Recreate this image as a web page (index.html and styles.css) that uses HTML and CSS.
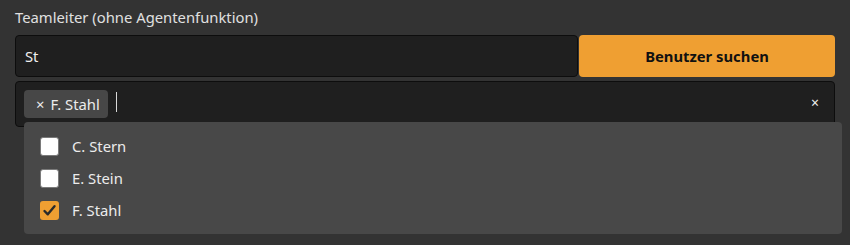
FILE: index.html
```html
<!DOCTYPE html>
<html lang="de">
<head>
<meta charset="utf-8">
<link rel="stylesheet" href="styles.css">
</head>
<body>
<div class="field">
  <div class="label">Teamleiter (ohne Agentenfunktion)</div>
  <div class="search-row">
    <div class="search-input">St</div>
    <button class="search-btn">Benutzer suchen</button>
  </div>
  <div class="multi">
    <div class="multi-box">
      <span class="chip"><span class="chip-x">×</span>F. Stahl</span>
      <span class="caret"></span>
      <span class="clear">×</span>
    </div>
    <ul class="dropdown">
      <li class="option"><span class="box"></span><span>C. Stern</span></li>
      <li class="option"><span class="box"></span><span>E. Stein</span></li>
      <li class="option"><span class="box checked"><svg viewBox="0 0 19 19" width="19" height="19"><path d="M4.5 10 L7.8 13.3 L14.5 5.2" fill="none" stroke="#2a2a2a" stroke-width="2.4" stroke-linecap="round" stroke-linejoin="round"/></svg></span><span>F. Stahl</span></li>
    </ul>
  </div>
</div>
</body>
</html>
```
FILE: styles.css
```css
* { box-sizing: border-box; }
html, body {
  margin: 0;
  padding: 0;
  background: #333333;
  height: 245px;
  overflow: hidden;
}
body {
  font-family: "Noto Sans", "Open Sans", sans-serif;
  font-size: 14.8px;
  color: #e8e8e8;
}
.field {
  padding: 7px 15px 0 15px;
}
.label {
  height: 28px;
  line-height: 20px;
  color: #e0e0e0;
}
.search-row {
  display: flex;
  gap: 1px;
  height: 42px;
}
.search-input {
  flex: 1;
  background: #1f1f1f;
  border: 1px solid #0d0d0d;
  border-radius: 4px;
  padding: 0 9px;
  display: flex;
  align-items: center;
  color: #f0f0f0;
}
.search-btn {
  width: 256px;
  border: none;
  border-radius: 4px;
  background: #ef9f32;
  color: #111;
  font-family: inherit;
  font-size: 14.8px;
  font-weight: 700;
  padding: 0;
}
.multi {
  position: relative;
  margin-top: 4px;
}
.multi-box {
  height: 46px;
  background: #1f1f1f;
  border: 1px solid #0d0d0d;
  border-radius: 4px;
  padding: 8px 8px 0 8px;
  display: flex;
  align-items: flex-start;
}
.chip {
  height: 28px;
  background: #474747;
  border-radius: 4px;
  padding: 0 8px 0 12px;
  display: flex;
  align-items: center;
  gap: 6px;
  color: #ececec;
}
.caret {
  width: 1px;
  height: 20px;
  background: #d8d8d8;
  margin: 2px 0 0 8px;
}
.clear {
  margin-left: auto;
  margin-right: 7px;
  margin-top: 3px;
  font-size: 14px;
  color: #f0f0f0;
}
.dropdown {
  position: absolute;
  left: 9px;
  right: -7px;
  top: 41px;
  margin: 0;
  list-style: none;
  background: #484848;
  border-radius: 4px;
  padding: 8px 16px;
}
.option {
  height: 32px;
  display: flex;
  align-items: center;
  gap: 13px;
  color: #ececec;
}
.box {
  width: 19px;
  height: 19px;
  background: #ffffff;
  border: 1.5px solid #7a7a7a;
  border-radius: 3px;
  display: flex;
}
.box.checked {
  background: #ef9f32;
  border: none;
}
```
